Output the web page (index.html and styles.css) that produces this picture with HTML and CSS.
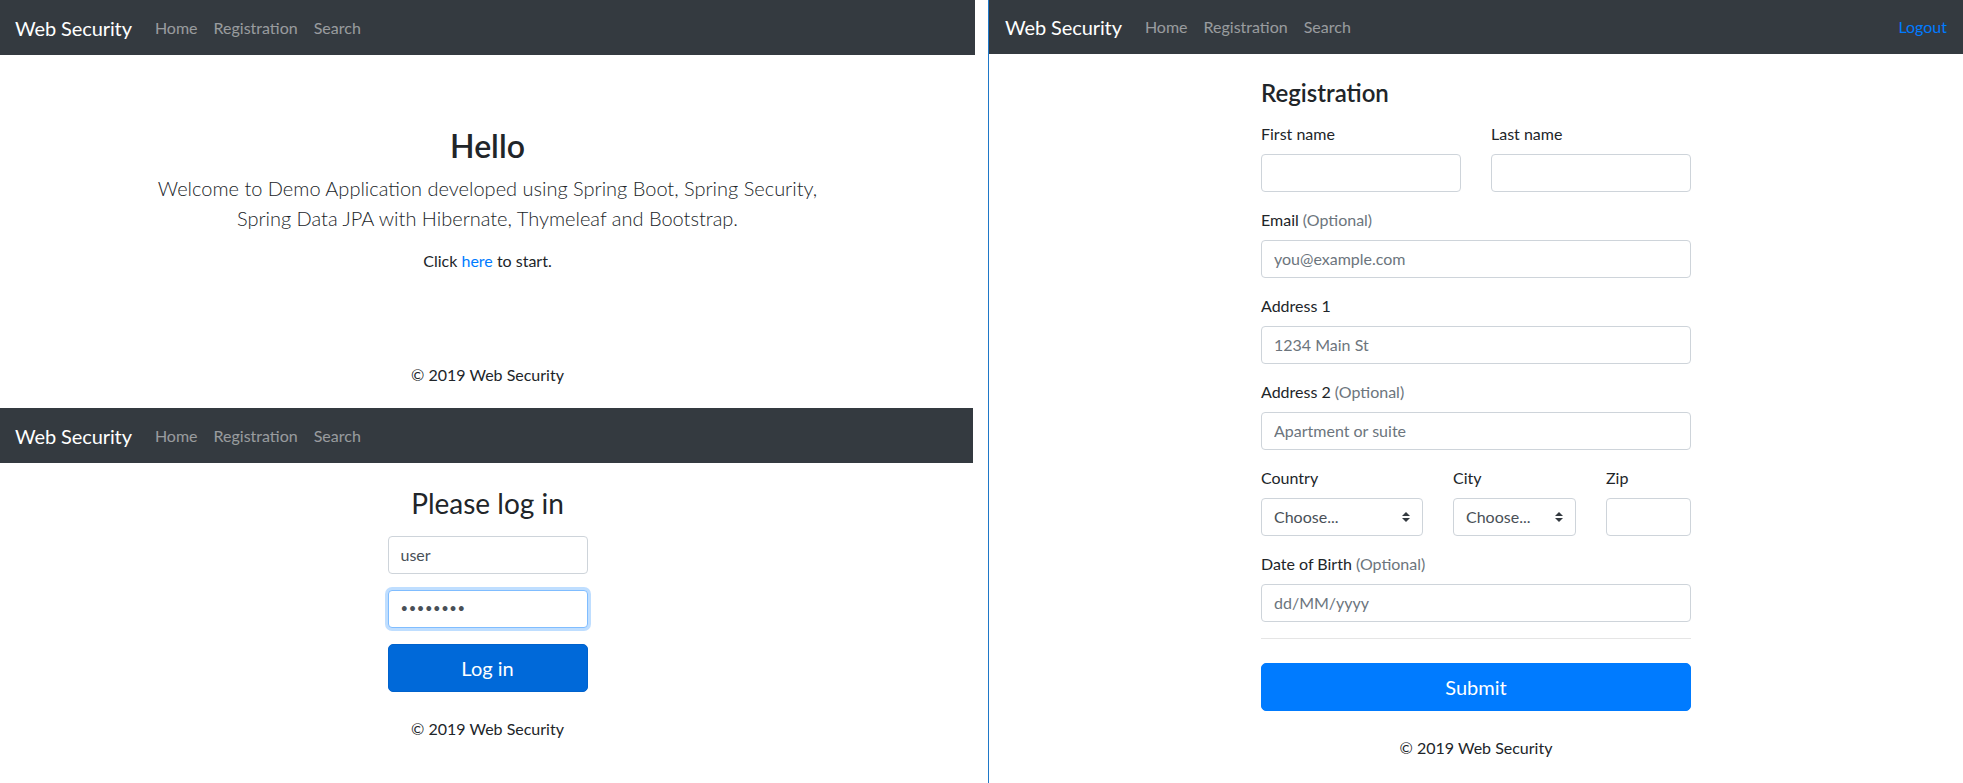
FILE: index.html
```html
<!DOCTYPE html>
<html lang="en">
<head>
<meta charset="utf-8">
<title>Web Security</title>
<link rel="stylesheet" href="styles.css">
</head>
<body>
<div class="left-col">
  <section class="panel home">
    <nav class="navbar">
      <span class="brand">Web Security</span>
      <ul class="nav">
        <li class="nav-link">Home</li>
        <li class="nav-link">Registration</li>
        <li class="nav-link">Search</li>
      </ul>
    </nav>
    <main class="home-main">
      <h2 class="hello">Hello</h2>
      <p class="lead">Welcome to Demo Application developed using Spring Boot, Spring Security,<br>Spring Data JPA with Hibernate, Thymeleaf and Bootstrap.</p>
      <p class="click">Click <a class="link" href="#">here</a> to start.</p>
    </main>
    <footer class="footer home-footer">© 2019 Web Security</footer>
  </section>
  <section class="panel login">
    <nav class="navbar navbar-short">
      <span class="brand">Web Security</span>
      <ul class="nav">
        <li class="nav-link">Home</li>
        <li class="nav-link">Registration</li>
        <li class="nav-link">Search</li>
      </ul>
    </nav>
    <main class="login-main">
      <h1 class="login-title">Please log in</h1>
      <input class="form-control login-input" type="text" value="user">
      <div class="form-control login-input focused"><span class="dots">••••••••</span></div>
      <button class="btn btn-login" type="button">Log in</button>
      <footer class="footer login-footer">© 2019 Web Security</footer>
    </main>
  </section>
</div>
<div class="divider"></div>
<section class="panel register">
  <nav class="navbar navbar-reg">
    <span class="brand">Web Security</span>
    <ul class="nav">
      <li class="nav-link">Home</li>
      <li class="nav-link">Registration</li>
      <li class="nav-link">Search</li>
    </ul>
    <span class="logout">Logout</span>
  </nav>
  <main class="reg-main">
    <h4 class="reg-title">Registration</h4>
    <div class="row two">
      <div class="form-group">
        <label class="label">First name</label>
        <input class="form-control" type="text">
      </div>
      <div class="form-group">
        <label class="label">Last name</label>
        <input class="form-control" type="text">
      </div>
    </div>
    <div class="form-group">
      <label class="label">Email <span class="muted">(Optional)</span></label>
      <input class="form-control" type="text" placeholder="you@example.com">
    </div>
    <div class="form-group">
      <label class="label">Address 1</label>
      <input class="form-control" type="text" placeholder="1234 Main St">
    </div>
    <div class="form-group">
      <label class="label">Address 2 <span class="muted">(Optional)</span></label>
      <input class="form-control" type="text" placeholder="Apartment or suite">
    </div>
    <div class="row three">
      <div class="form-group">
        <label class="label">Country</label>
        <div class="form-control custom-select"><span>Choose...</span>
          <svg class="sel-arrow" width="8" height="10" viewBox="0 0 4 5"><path d="M2 0L0 2h4zm0 5L0 3h4z" fill="#343a40"/></svg>
        </div>
      </div>
      <div class="form-group">
        <label class="label">City</label>
        <div class="form-control custom-select"><span>Choose...</span>
          <svg class="sel-arrow" width="8" height="10" viewBox="0 0 4 5"><path d="M2 0L0 2h4zm0 5L0 3h4z" fill="#343a40"/></svg>
        </div>
      </div>
      <div class="form-group">
        <label class="label">Zip</label>
        <input class="form-control" type="text">
      </div>
    </div>
    <div class="form-group">
      <label class="label">Date of Birth <span class="muted">(Optional)</span></label>
      <input class="form-control" type="text" placeholder="dd/MM/yyyy">
    </div>
    <hr class="rule">
    <button class="btn btn-submit" type="button">Submit</button>
    <footer class="footer reg-footer">© 2019 Web Security</footer>
  </main>
</section>
</body>
</html>
```
FILE: styles.css
```css
* { box-sizing: border-box; }
html, body { margin: 0; padding: 0; }
body {
  width: 1963px;
  height: 783px;
  overflow: hidden;
  display: flex;
  background: #fff;
  font-family: Lato, "Liberation Sans", sans-serif;
  font-size: 16px;
  line-height: 1.5;
  color: #212529;
}
.left-col { width: 975px; display: flex; flex-direction: column; }
.panel { display: flex; flex-direction: column; }
.home { height: 408px; }
.login { height: 375px; }
.divider { width: 1px; margin-left: 13px; background: #1f78c8; }
.register { width: 974px; }

.navbar {
  height: 55px;
  background: #343a40;
  display: flex;
  align-items: center;
  padding: 0 16px 0 15px;
  flex-shrink: 0;
}
.navbar-short { margin-right: 2px; }
.navbar-reg { height: 54px; padding-left: 16px; }
.brand { color: #fff; font-size: 20px; line-height: 30px; margin-right: 15px; letter-spacing: -0.1px; }
.nav { list-style: none; margin: 0; padding: 0; display: flex; }
.nav-link { color: rgba(255,255,255,.5); padding: 0 8px; line-height: 24px; }
.logout { margin-left: auto; color: #007bff; line-height: 24px; }

.home-main { padding-top: 72px; text-align: center; }
.hello { margin: 0 0 8px; font-size: 32px; font-weight: 600; line-height: 1.2; }
.lead { margin: 0 0 16px; font-size: 20px; font-weight: 300; line-height: 30px; }
.click { margin: 0; }
.link { color: #007bff; text-decoration: none; }
.footer { text-align: center; line-height: 24px; }
.home-footer { margin-top: auto; padding-bottom: 21px; }

.login-main { display: flex; flex-direction: column; align-items: center; padding-top: 24px; }
.login-title { margin: 0 0 15px; font-size: 28px; font-weight: 400; line-height: 1.2; }
.form-control {
  display: block;
  width: 100%;
  height: 38px;
  padding: 6px 12px;
  font-family: inherit;
  font-size: 16px;
  line-height: 24px;
  color: #495057;
  background: #fff;
  border: 1px solid #ced4da;
  border-radius: 4px;
  outline: none;
}
.form-control::placeholder { color: #6c757d; opacity: 1; }
.login-input { width: 200px; margin-bottom: 16px; }
.focused { border-color: #80bdff; box-shadow: 0 0 0 3px rgba(0,123,255,.25); display: flex; align-items: center; }
.dots { font-size: 13px; letter-spacing: 0.6px; color: #495057; line-height: 1; }
.btn {
  display: block;
  height: 48px;
  border-radius: 5px;
  font-family: inherit;
  font-size: 20px;
  line-height: 30px;
  color: #fff;
  border: 1px solid transparent;
  padding: 8px 16px;
}
.btn-login { width: 200px; background: #0069d9; border-color: #0062cc; }
.login-footer { margin-top: 25px; }

.reg-main { width: 430px; margin: 0 auto; padding-top: 25px; }
.reg-title { margin: 0 0 14px; font-size: 24px; font-weight: 600; line-height: 1.2; }
.form-group { margin-bottom: 16px; }
.label { display: block; margin-bottom: 8px; line-height: 24px; }
.muted { color: #6c757d; }
.row { display: grid; column-gap: 30px; }
.two { grid-template-columns: 200px 200px; }
.three { grid-template-columns: 162px 123px 85px; }
.custom-select { display: flex; align-items: center; justify-content: space-between; }
.sel-arrow { flex-shrink: 0; }
.rule { margin: 0 0 24px; border: 0; border-top: 1px solid rgba(0,0,0,.1); }
.btn-submit { width: 100%; background: #007bff; border-color: #007bff; }
.reg-footer { margin-top: 25px; }
```
